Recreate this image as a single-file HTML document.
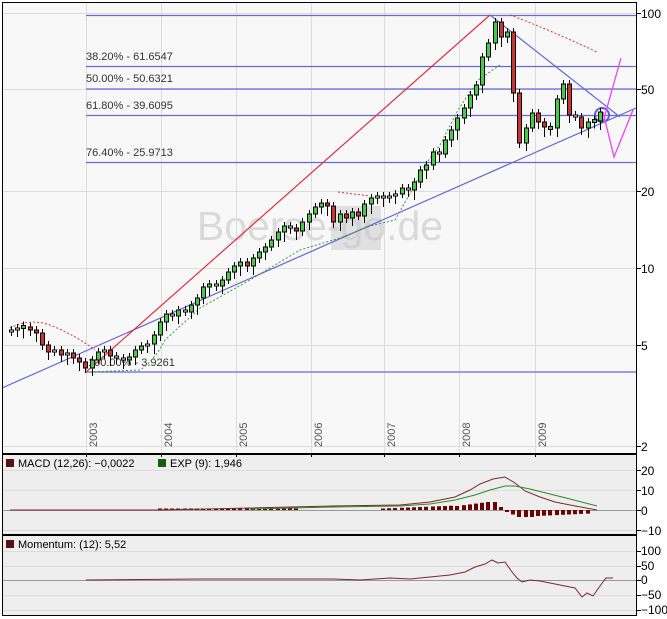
<!DOCTYPE html>
<html><head><meta charset="utf-8"><style>
html,body{margin:0;padding:0;background:#fff;width:667px;height:619px;overflow:hidden}
svg{display:block;font-family:"Liberation Sans",sans-serif}
</style></head><body>
<svg id="s" width="667" height="619" xmlns="http://www.w3.org/2000/svg">
<rect x="2" y="2" width="634" height="451" fill="#f8f8f8"/>
<rect x="2" y="455" width="634" height="79" fill="#eeeeee"/>
<rect x="2" y="536" width="634" height="79" fill="#eeeeee"/>
<g stroke="#dcdcdc" stroke-width="1">
<line x1="2" y1="13.5" x2="636" y2="13.5"/><line x1="2" y1="89.5" x2="636" y2="89.5"/><line x1="2" y1="191.5" x2="636" y2="191.5"/><line x1="2" y1="268.5" x2="636" y2="268.5"/><line x1="2" y1="345.5" x2="636" y2="345.5"/><line x1="2" y1="446.5" x2="636" y2="446.5"/>
<line x1="86.5" y1="2" x2="86.5" y2="453"/><line x1="161.5" y1="2" x2="161.5" y2="453"/><line x1="236.5" y1="2" x2="236.5" y2="453"/><line x1="311.5" y1="2" x2="311.5" y2="453"/><line x1="384.5" y1="2" x2="384.5" y2="453"/><line x1="459.5" y1="2" x2="459.5" y2="453"/><line x1="535.5" y1="2" x2="535.5" y2="453"/>
<line x1="2" y1="470.5" x2="636" y2="470.5"/><line x1="2" y1="490.5" x2="636" y2="490.5"/><line x1="2" y1="530.5" x2="636" y2="530.5"/>
<line x1="2" y1="551.5" x2="636" y2="551.5"/><line x1="2" y1="566.5" x2="636" y2="566.5"/><line x1="2" y1="595.5" x2="636" y2="595.5"/><line x1="2" y1="610.5" x2="636" y2="610.5"/>
</g>
<line x1="2" y1="510.5" x2="636" y2="510.5" stroke="#999"/>
<line x1="2" y1="580.5" x2="636" y2="580.5" stroke="#999"/>
<text x="320" y="240" font-size="41" fill="#dadada" text-anchor="middle">Boerse-go.de</text>
<rect x="331" y="206" width="50" height="44" fill="#c8c8c8" opacity="0.5"/>
<g stroke="#6666dd" stroke-width="1.2">
<line x1="86" y1="15.5" x2="636" y2="15.5"/><line x1="86" y1="66.5" x2="636" y2="66.5"/><line x1="86" y1="89" x2="636" y2="89"/><line x1="86" y1="115.5" x2="636" y2="115.5"/><line x1="86" y1="162.5" x2="636" y2="162.5"/><line x1="86" y1="372" x2="636" y2="372"/>
<line x1="2" y1="388" x2="636" y2="108"/><line x1="490" y1="15" x2="620" y2="117"/>
</g>
<circle cx="602" cy="115" r="7" fill="none" stroke="#5a5ae0" stroke-width="2"/>
<g font-size="11" fill="#333">
<text x="86" y="60">38.20% - 61.6547</text><text x="86" y="82">50.00% - 50.6321</text><text x="86" y="109">61.80% - 39.6095</text><text x="86" y="156">76.40% - 25.9713</text><text x="88" y="366">100.00% - 3.9261</text>
</g>
<line x1="86" y1="372" x2="490" y2="15" stroke="#e03040" stroke-width="1.2"/>
<polyline points="603,122 621,58" fill="none" stroke="#ee44ee" stroke-width="1.3"/>
<polyline points="603,112 614,157 633,110" fill="none" stroke="#ee44ee" stroke-width="1.3"/>
<g fill="none" stroke="#e03030" stroke-dasharray="2,2" stroke-width="1">
<path d="M510,15 Q550,30 597,52"/><path d="M10,328 Q30,318 50,325 Q75,335 95,350"/><path d="M338,192 L370,196"/>
</g>
<path d="M90,372 L140,370 Q155,360 165,340 L200,308 L250,280 L300,250 L340,238 L370,226 L395,220 L412,190 L425,165 L440,145 L458,110 L478,80 L500,65" fill="none" stroke="#3a9a3a" stroke-dasharray="2,2"/>
<g id="c"></g>
<g id="h"></g>
<polyline points="10,510 160,510 250,508 333,506 400,505 430,502 455,497 470,490 480,484 493,479 505,477 515,483 525,491 540,497 555,502 570,505 597,510" fill="none" stroke="#7a2a2a" stroke-width="1"/>
<polyline points="250,509 333,507 400,506 430,504 455,500 475,495 490,490 505,486 515,486 530,489 550,494 570,499 597,506" fill="none" stroke="#2a8a2a" stroke-width="1"/>
<polyline points="86,580 200,579 333,579 360,580 390,578 410,579 430,577 450,575 465,572 475,567 485,564 492,560 498,563 505,562 512,572 517,578 522,582 530,580 540,581 550,583 560,585 570,587 575,588 582,597 587,593 593,596 600,586 606,578 613,578" fill="none" stroke="#7a2a2a" stroke-width="1"/>
<g fill="none" stroke="#000" stroke-width="1">
<rect x="2.5" y="2.5" width="634" height="451"/>
<rect x="2.5" y="454.5" width="634" height="80"/>
<rect x="2.5" y="535.5" width="634" height="80"/>
</g>
<g stroke="#000">
<line x1="636" y1="13.5" x2="641" y2="13.5"/><line x1="636" y1="89.5" x2="641" y2="89.5"/><line x1="636" y1="191.5" x2="641" y2="191.5"/><line x1="636" y1="268.5" x2="641" y2="268.5"/><line x1="636" y1="345.5" x2="641" y2="345.5"/><line x1="636" y1="446.5" x2="641" y2="446.5"/>
<line x1="636" y1="470.5" x2="641" y2="470.5"/><line x1="636" y1="490.5" x2="641" y2="490.5"/><line x1="636" y1="510.5" x2="641" y2="510.5"/><line x1="636" y1="530.5" x2="641" y2="530.5"/>
<line x1="636" y1="551.5" x2="641" y2="551.5"/><line x1="636" y1="566.5" x2="641" y2="566.5"/><line x1="636" y1="580.5" x2="641" y2="580.5"/><line x1="636" y1="595.5" x2="641" y2="595.5"/><line x1="636" y1="610.5" x2="641" y2="610.5"/>
<line x1="86.5" y1="453" x2="86.5" y2="457"/><line x1="161.5" y1="453" x2="161.5" y2="457"/><line x1="236.5" y1="453" x2="236.5" y2="457"/><line x1="311.5" y1="453" x2="311.5" y2="457"/><line x1="384.5" y1="453" x2="384.5" y2="457"/><line x1="459.5" y1="453" x2="459.5" y2="457"/><line x1="535.5" y1="453" x2="535.5" y2="457"/>
</g>
<g font-size="12" fill="#000">
<text x="641" y="18">100</text><text x="641" y="94">50</text><text x="641" y="196">20</text><text x="641" y="273">10</text><text x="641" y="350">5</text><text x="641" y="451">2</text>
<text x="641" y="475">20</text><text x="641" y="495">10</text><text x="641" y="515">0</text><text x="641" y="535">−10</text>
<text x="641" y="555">100</text><text x="641" y="570">50</text><text x="641" y="584">0</text><text x="641" y="599">−50</text><text x="641" y="614">−100</text>
</g>
<g font-size="11" fill="#555">
<text transform="translate(97,447) rotate(-90)">2003</text><text transform="translate(172,447) rotate(-90)">2004</text><text transform="translate(247,447) rotate(-90)">2005</text><text transform="translate(322,447) rotate(-90)">2006</text><text transform="translate(395,447) rotate(-90)">2007</text><text transform="translate(470,447) rotate(-90)">2008</text><text transform="translate(546,447) rotate(-90)">2009</text>
</g>
<rect x="6" y="459" width="8" height="8" fill="#5a1010"/>
<rect x="158" y="459" width="8" height="8" fill="#106010"/>
<rect x="6" y="540" width="8" height="8" fill="#5a1010"/>
<g font-size="11" fill="#000">
<text x="18" y="467">MACD (12,26): −0,0022</text><text x="170" y="467">EXP (9): 1,946</text><text x="18" y="548">Momentum: (12): 5,52</text>
</g>
</svg>
<script>
var cl=[330,328,327,330,333,345,352,350,355,353,358,362,
368,360,352,350,356,358,360,357,350,346,344,335,
322,314,316,310,312,305,298,287,284,286,280,272,
266,262,266,258,252,247,240,232,226,228,231,222,
214,207,203,206,222,214,218,212,216,204,198,196,
198,196,194,188,190,182,170,165,152,154,140,130,
118,108,95,85,57,43,22,37,32,93,143,128,
113,122,127,128,99,84,115,117,128,122,121,112];
var g=document.getElementById('c'),s="";
for(var i=0;i<cl.length;i++){
 var x=Math.round(11+i*6.2)+0.5;var o=i?cl[i-1]:cl[0]+2;var c=cl[i];
 if(Math.abs(o-c)<2){o=c+1.5;c=c-1.5;}
 var t=Math.min(o,c),b=Math.max(o,c);var col=c<o?"#44cc44":"#cc3333";
 if(b-t<3)col="#fff";
 var wt=t-4-(i*7%7),wb=b+4+(i*3%7);
 s+='<line x1="'+x+'" y1="'+wt+'" x2="'+x+'" y2="'+wb+'" stroke="#000"/>';
 s+='<rect x="'+(x-2)+'" y="'+t+'" width="4" height="'+(b-t)+'" fill="'+col+'" stroke="#000" stroke-width="1"/>';
}
g.innerHTML=s;
var h="";
for(var i=24;i<94;i++){var x=Math.round(11+i*6.2)-2;var v;
 if(i>=47&&i<60)continue;
 if(i<60)v=1.5; else if(i<72)v=1.5+(i-60)*0.25; else if(i<78)v=4+(i-72)*0.8; else if(i<80)v=8-(i-78)*4; else if(i<82)v=-2-(i-80)*2.5; else if(i<85)v=-7; else v=-6+(i-85)*0.3;
 if(i==79)v=3;
 var y=v>0?510-v:510;h+='<rect x="'+x+'" y="'+y+'" width="4" height="'+Math.max(1.5,Math.abs(v))+'" fill="#6a0000"/>';}
document.getElementById('h').innerHTML=h;
</script>
</body></html>
